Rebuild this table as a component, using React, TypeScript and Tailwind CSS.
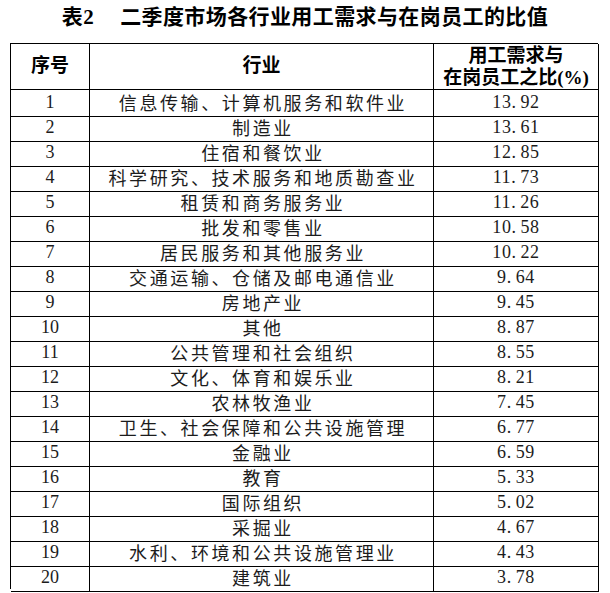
type Row = {
  no: number;
  industry: string;
  ratio: string;
};

const rows: Row[] = [
  { no: 1, industry: "信息传输、计算机服务和软件业", ratio: "13.92" },
  { no: 2, industry: "制造业", ratio: "13.61" },
  { no: 3, industry: "住宿和餐饮业", ratio: "12.85" },
  { no: 4, industry: "科学研究、技术服务和地质勘查业", ratio: "11.73" },
  { no: 5, industry: "租赁和商务服务业", ratio: "11.26" },
  { no: 6, industry: "批发和零售业", ratio: "10.58" },
  { no: 7, industry: "居民服务和其他服务业", ratio: "10.22" },
  { no: 8, industry: "交通运输、仓储及邮电通信业", ratio: "9.64" },
  { no: 9, industry: "房地产业", ratio: "9.45" },
  { no: 10, industry: "其他", ratio: "8.87" },
  { no: 11, industry: "公共管理和社会组织", ratio: "8.55" },
  { no: 12, industry: "文化、体育和娱乐业", ratio: "8.21" },
  { no: 13, industry: "农林牧渔业", ratio: "7.45" },
  { no: 14, industry: "卫生、社会保障和公共设施管理", ratio: "6.77" },
  { no: 15, industry: "金融业", ratio: "6.59" },
  { no: 16, industry: "教育", ratio: "5.33" },
  { no: 17, industry: "国际组织", ratio: "5.02" },
  { no: 18, industry: "采掘业", ratio: "4.67" },
  { no: 19, industry: "水利、环境和公共设施管理业", ratio: "4.43" },
  { no: 20, industry: "建筑业", ratio: "3.78" },
];

const cell = "flex items-center justify-center border-r border-b border-black";
const serif = "font-['Liberation_Serif','Noto_Sans_CJK_SC',serif]";

// SimSun-style value: wide half-width digits, the dot gets a full cell too
const Ratio = ({ value }: { value: string }) => {
  const [a, b] = value.split(".");
  return (
    <span className={`${serif} text-[18px] tracking-[0.6px]`}>
      {a}
      <span className="inline-block w-[9px] text-left">.</span>
      {b}
    </span>
  );
};

const App = () => {
  return (
    <div className="w-[610px] h-[593px] bg-white text-[#1c1c1c]">
      {/* Title */}
      <div className="h-[43px] pt-[5px] flex justify-center">
        <h1 className={`${serif} text-[21px] leading-[25px] font-bold tracking-[0.4px] text-black`}>
          表2
          <span className="ml-[26px]">二季度市场各行业用工需求与在岗员工的比值</span>
        </h1>
      </div>

      {/* Table */}
      <div className="ml-[10px] w-[588px] border-t border-l border-black">
        {/* Header */}
        <div className={`grid grid-cols-[79px_344px_165px] h-[45px] font-bold text-black ${serif}`}>
          <div className={`${cell} text-[19px]`}>序号</div>
          <div className={`${cell} text-[19px]`}>行业</div>
          <div className={`${cell} flex-col text-[19px] leading-[22px] pt-[1px]`}>
            <span>用工需求与</span>
            <span>在岗员工之比(%)</span>
          </div>
        </div>

        {/* Body */}
        {rows.map((row) => (
          <div key={row.no} className="grid grid-cols-[79px_344px_165px] h-[25px]">
            <div className={`${cell} ${serif} text-[18px]`}>{row.no}</div>
            <div
              className={`${cell} pl-[3px] text-[18px] tracking-[2.6px] font-['Noto_Sans_CJK_SC',sans-serif]`}
            >
              {row.industry}
            </div>
            <div className={cell}>
              <Ratio value={row.ratio} />
            </div>
          </div>
        ))}
      </div>
    </div>
  );
};

export default App;
